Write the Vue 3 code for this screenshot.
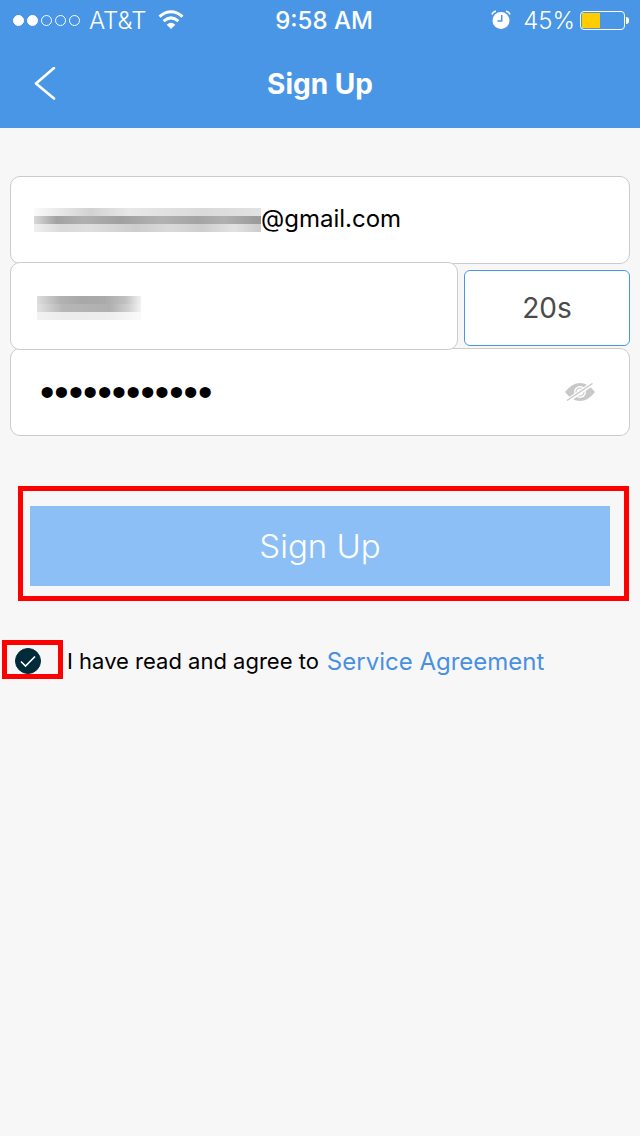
<template>
  <div class="page">
    <header class="header">
      <div class="status">
        <div class="status__side">
          <span class="status__signal">
            <i v-for="n in 5" :key="n" class="dot" :class="{ 'dot--on': n <= 2 }"></i>
          </span>
          <span class="status__carrier">AT&amp;T</span>
          <svg class="status__wifi" width="26" height="20" viewBox="0 0 26 20" fill="none">
            <path d="M1.5 6.7Q13 -3.1 24.5 6.7" stroke="#fff" stroke-width="3" />
            <path d="M5.6 11.1Q13 4.7 20.4 11.1" stroke="#fff" stroke-width="3" />
            <path d="M8.7 14.7Q13 11 17.3 14.7L13 19Z" fill="#fff" />
          </svg>
        </div>
        <span class="status__time">9:58 AM</span>
        <div class="status__side status__side--right">
          <svg width="20" height="20" viewBox="0 0 20 20" fill="none">
            <circle cx="10" cy="10.5" r="8.5" fill="#fff" />
            <path d="M1 4.5Q2 1.5 5 1.2M19 4.5Q18 1.5 15 1.2" stroke="#fff" stroke-width="1.6" />
            <path d="M10.7 5V11H6.5" stroke="#4a96e6" stroke-width="1.5" />
          </svg>
          <span class="status__percent">{{ battery }}%</span>
          <span class="battery">
            <span class="battery__body">
              <span class="battery__level" :style="{ width: battery + '%' }"></span>
            </span>
            <span class="battery__tip"></span>
          </span>
        </div>
      </div>

      <div class="nav">
        <button type="button" class="nav__back" aria-label="Back">
          <svg width="22" height="34" viewBox="0 0 22 34" fill="none">
            <path
              d="M20 1L2 16.5L20 31.5"
              stroke="#fff"
              stroke-width="2.6"
              stroke-linecap="round"
              stroke-linejoin="round"
            />
          </svg>
        </button>
        <h1 class="nav__title">Sign Up</h1>
      </div>
    </header>

    <form class="form" @submit.prevent>
      <div class="field field--email">
        <span class="mask mask--email"><i></i><i></i><i></i></span>
        <input
          v-model="email"
          class="field__input field__input--email"
          type="text"
          aria-label="Email"
        />
      </div>

      <div class="code-row">
        <div class="field field--code">
          <span class="mask mask--code"><i></i><i></i><i></i></span>
          <input v-model="code" class="field__input" type="text" aria-label="Verification code" />
        </div>
        <button type="button" class="countdown">{{ seconds }}s</button>
      </div>

      <div class="field field--password">
        <input
          v-model="password"
          class="field__input field__input--password"
          :type="showPassword ? 'text' : 'password'"
          aria-label="Password"
        />
        <button
          type="button"
          class="field__eye"
          aria-label="Show password"
          @click="showPassword = !showPassword"
        >
          <svg width="32" height="22" viewBox="0 0 32 22" fill="none">
            <path d="M1 11Q8 2 16 2T31 11Q24 20 16 20T1 11Z" fill="#c8c8c8" />
            <circle cx="16" cy="11" r="6" fill="#fff" />
            <circle cx="16" cy="11" r="4" stroke="#c8c8c8" stroke-width="1.2" />
            <path d="M3 20L28 3" stroke="#fff" stroke-width="4" />
            <path d="M3 19.5L28.5 2.5" stroke="#c8c8c8" stroke-width="1.5" />
          </svg>
        </button>
      </div>

      <div class="submit">
        <button type="submit" class="submit__button">Sign Up</button>
        <span class="frame frame--submit"></span>
      </div>

      <div class="agree">
        <span class="agree__check">
          <input id="agree" v-model="agreed" class="agree__input" type="checkbox" />
          <svg v-if="agreed" class="agree__tick" width="26" height="26" viewBox="0 0 26 26" fill="none">
            <path d="M6 13.5L10.5 18L20 8.5" stroke="#fff" stroke-width="1.6" />
          </svg>
          <span class="frame frame--check"></span>
        </span>
        <label for="agree">I have read and agree to</label>
        <a href="#" class="agree__link">Service Agreement</a>
      </div>
    </form>
  </div>
</template>

<script setup>
import { ref } from 'vue'

const battery = ref(45)
const seconds = ref(20)
const email = ref('@gmail.com')
const code = ref('')
const password = ref('abcdef123456')
const showPassword = ref(false)
const agreed = ref(true)
</script>

<style>
body {
  margin: 0;
  background: #f7f7f7;
}
</style>

<style scoped>
.page {
  min-height: 100vh;
  background: #f7f7f7;
  color: #000;
  font-family: Inter, 'Liberation Sans', sans-serif;
}

.page *,
.page {
  box-sizing: border-box;
}

button,
input {
  margin: 0;
  padding: 0;
  border: none;
  background: transparent;
  font: inherit;
  outline: none;
}

button {
  cursor: pointer;
}

.header {
  background: #4a96e6;
  color: #fff;
}

.status {
  height: 40px;
  padding: 0 11px 0 13px;
  display: grid;
  grid-template-columns: 1fr auto 1fr;
  align-items: center;
  font-size: 24px;
  line-height: 40px;
}

.status__side {
  display: flex;
  align-items: center;
  font-weight: 300;
}

.status__side--right {
  justify-content: flex-end;
}

.status__side--right > svg {
  margin-right: 12px;
}

.status__signal {
  display: flex;
  gap: 3px;
}

.dot {
  width: 11px;
  height: 11px;
  border: 1px solid #fff;
  border-radius: 50%;
}

.dot--on {
  background: #fff;
}

.status__carrier {
  margin: 0 12px 0 9px;
}

.status__carrier,
.status__time,
.status__percent {
  padding-top: 2px;
  line-height: 38px;
}

.status__time {
  padding-left: 6px;
  font-weight: 500;
}

.battery {
  display: flex;
  align-items: center;
  gap: 1px;
  margin-left: 5px;
}

.battery__body {
  width: 45px;
  height: 19px;
  padding: 1px;
  display: flex;
  border: 1px solid #fff;
  border-radius: 4px;
}

.battery__level {
  background: #fc0;
}

.battery__tip {
  width: 3px;
  height: 7px;
  border-radius: 0 3px 3px 0;
  background: #fff;
}

.nav {
  height: 88px;
  padding: 0 34px;
  display: grid;
  grid-template-columns: 1fr auto 1fr;
  align-items: center;
}

.nav__back {
  width: 22px;
  height: 34px;
  display: flex;
}

.nav__title {
  margin: 0;
  font-size: 28px;
  line-height: 40px;
  font-weight: 700;
}

.form {
  padding: 48px 10px;
}

.field {
  min-width: 0;
  height: 88px;
  display: flex;
  align-items: center;
  border: 1px solid #ccc;
  border-radius: 10px;
  background: #fff;
}

.field__input {
  flex: 1;
  min-width: 0;
  height: 48px;
  font-size: 24px;
}

.field__input--email {
  padding-bottom: 4px;
}

.field--email {
  padding: 0 23px;
}

.field--code {
  flex: 1;
  padding: 0 26px;
}

.field--password {
  padding: 0 33px 0 29px;
  margin-top: -2px;
}

.field__input--password {
  font-family: 'Liberation Sans', Arial, sans-serif;
  font-size: 41px;
}

.field__eye {
  width: 32px;
  height: 22px;
  display: flex;
}

.code-row {
  margin-top: -2px;
  display: flex;
  align-items: center;
  gap: 6px;
}

.countdown {
  flex-shrink: 0;
  width: 166px;
  height: 76px;
  margin-top: 4px;
  border: 1px solid #4a96e6;
  border-radius: 6px;
  background: #fff;
  color: #4a4a4a;
  font-size: 28px;
}

.mask {
  flex-shrink: 0;
  height: 24px;
  display: flex;
  flex-direction: column;
}

.mask i {
  height: 8px;
}

.mask--email {
  width: 227px;
}

.mask--email i:nth-child(1) {
  background: linear-gradient(90deg, #fafafa, #d2d2d2 25%, #e8e8e8 42%, #dadada 75%, #e2e2e2);
}

.mask--email i:nth-child(2) {
  background: linear-gradient(90deg, #d8d8d8, #a2a2a2 10%, #b0b0b0 22%, #a0a0a0 38%, #b2b2b2 56%, #a4a4a4 72%, #b0b0b0 84%, #999);
}

.mask--email i:nth-child(3) {
  background: linear-gradient(90deg, #f0f0f0, #dadada 12%, #dedede 25%, #cdcdcd 45%, #dadada 60%, #cecece 74%, #e2e2e2 88%, #ccc);
}

.mask--code {
  width: 104px;
  align-self: flex-start;
  margin-top: 33px;
}

.mask--code i:nth-child(1) {
  background: linear-gradient(90deg, #ddd, #b2b2b2 22%, #a8a8a8 42%, #aaa 65%, #c0c0c0 85%, #f2f2f2);
}

.mask--code i:nth-child(2) {
  background: linear-gradient(90deg, #e2e2e2, #b6b6b6 25%, #b0b0b0 70%, #d0d0d0 88%, #f4f4f4);
}

.mask--code i:nth-child(3) {
  background: linear-gradient(90deg, #f2f2f2, #ebebeb 30%, #eee 70%, #fafafa);
}

.submit {
  position: relative;
  margin: 70px 20px 0;
}

.submit__button {
  display: block;
  width: 100%;
  height: 80px;
  background: #8bbff6;
  color: #fff;
  font-size: 33px;
  font-weight: 300;
}

.frame {
  position: absolute;
  border: 5px solid #f00;
  pointer-events: none;
}

.frame--submit {
  inset: -20px -19px -15px -12px;
}

.agree {
  margin-top: 61px;
  padding-left: 5px;
  display: flex;
  align-items: center;
  font-size: 22px;
  line-height: 28px;
}

.agree__check {
  position: relative;
  width: 26px;
  height: 26px;
  margin-right: 26px;
}

.agree__input {
  display: block;
  width: 26px;
  height: 26px;
  appearance: none;
  border: 1px solid #022b3a;
  border-radius: 50%;
}

.agree__input:checked {
  background: #022b3a;
}

.agree__tick {
  position: absolute;
  inset: 0;
  pointer-events: none;
}

.frame--check {
  inset: -8px -22px -5px -13px;
}

.agree__link {
  padding-top: 2px;
  margin-left: 8px;
  color: #4a90e2;
  font-size: 24px;
  line-height: 26px;
  text-decoration: none;
}
</style>
